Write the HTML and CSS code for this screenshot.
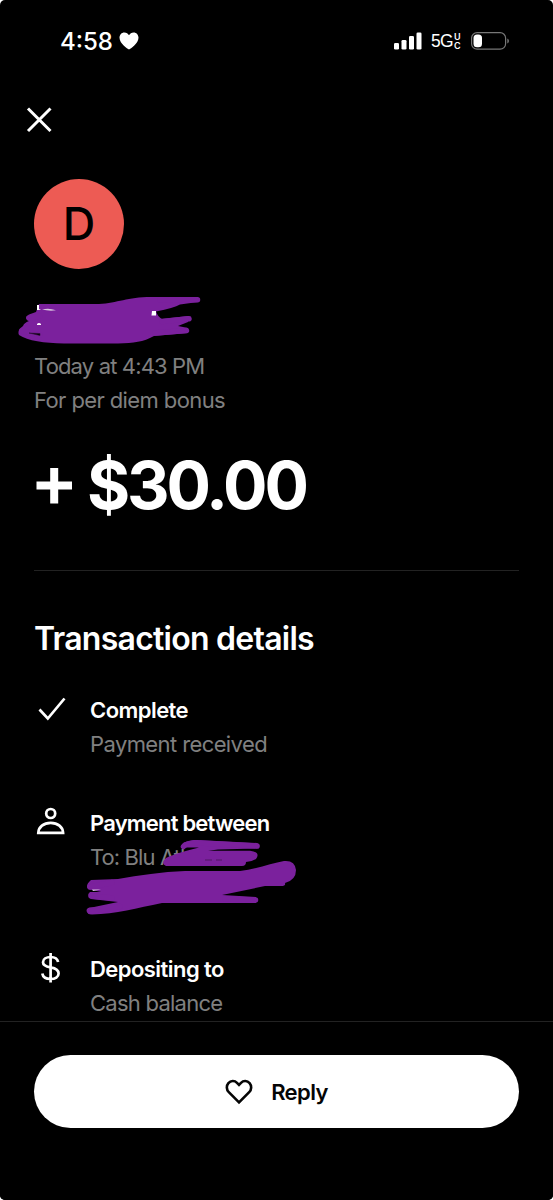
FILE: index.html
```
<!DOCTYPE html>
<html lang="en">
<head>
<meta charset="utf-8">
<title>Transaction details</title>
<link rel="stylesheet" href="styles.css">
</head>
<body>
<main class="screen">
  <header class="status">
    <span class="time">4:58</span>
    <svg class="status-heart" width="20" height="18" viewBox="0 0 20 18"><path fill="#fff" d="M10 17.500C8.500 16.800 0.500 11.500 0.500 5.800C0.500 2.700 2.700 0.500 5.300 0.500C7.500 0.500 9.100 1.700 10 3.300C10.900 1.700 12.500 0.500 14.700 0.500C17.300 0.500 19.500 2.700 19.500 5.800C19.500 11.500 11.500 16.800 10 17.500Z"/></svg>
    <svg class="signal" width="28" height="18" viewBox="0 0 28 18" fill="#fff"><rect x="0" y="11" width="5" height="6.500" rx="1.300"/><rect x="7.500" y="8" width="5" height="9.500" rx="1.300"/><rect x="15" y="4" width="5" height="13.500" rx="1.300"/><rect x="22.500" y="0.500" width="5" height="17" rx="1.300"/></svg>
    <span class="network">5G</span>
    <span class="uc"><span>U</span><span>C</span></span>
    <svg class="battery" width="40" height="20" viewBox="0 0 40 20"><rect x="1.600" y="1.600" width="34" height="16.600" rx="5.500" fill="none" stroke="#777" stroke-width="1.200"/><rect x="3.500" y="3.500" width="8.500" height="12.800" rx="3.500" fill="#fff"/><path d="M37.300 7.500Q39 8.200 39 10T37.300 12.500Z" fill="#777"/></svg>
  </header>

  <nav class="nav">
    <svg width="26" height="26" viewBox="0 0 26 26"><path d="M2 1.500L24.500 24M24.500 1.500L2 24" stroke="#fff" stroke-width="3"/></svg>
  </nav>

  <section class="summary">
    <div class="avatar">D</div>
    <div class="name"></div>
    <p class="muted when">Today at 4:43 PM</p>
    <p class="muted note">For per diem bonus</p>
    <p class="amount"><svg class="plus" width="54" height="72" viewBox="0 0 54 72"><path d="M2.500 36.500H38M20.200 19V54.500" stroke="#fff" stroke-width="8"/></svg><span class="value">$30.00</span></p>
  </section>

  <section class="details">
    <h2>Transaction details</h2>
    <div class="item complete">
      <svg class="icon" width="32" height="34" viewBox="0 0 32 34"><path d="M5.500 16.500L13.800 25.500L30.500 5.500" fill="none" stroke="#fff" stroke-width="2.700"/></svg>
      <div><p class="label l1">Complete</p><p class="muted m1">Payment received</p></div>
    </div>
    <div class="item between">
      <svg class="icon" width="32" height="34" viewBox="0 0 32 34" fill="none" stroke="#fff" stroke-width="2.700"><circle cx="16.700" cy="7.500" r="4.500"/><path d="M4.300 26.800C4.600 21 9.600 16.800 16.700 16.800S28.800 21 29.100 26.800Z"/></svg>
      <div><p class="label l2">Payment between</p><p class="muted m2">To: Blu Ath</p></div>
    </div>
    <div class="item deposit">
      <svg class="icon" width="32" height="34" viewBox="0 0 32 34" fill="none" stroke="#fff" stroke-width="2.700"><path d="M16.600 1V30.500M24.100 10C23.500 6.800 20.600 5 16.600 5C12.400 5 9 7 9 10.200C9 13.600 12.200 14.600 16.600 15.400C21.400 16.300 24.600 17.700 24.600 21.500C24.600 25 21.200 27 16.600 27C12 27 8.900 25 8.300 21.500"/></svg>
      <div><p class="label l3">Depositing to</p><p class="muted m3">Cash balance</p></div>
    </div>
  </section>

  <footer class="footer">
    <button class="reply">
      <svg width="28" height="26" viewBox="0 0 28 26"><path d="M14 23.300L3.800 13.200C1.300 10.700 1.200 6.600 3.400 4.100C5.700 1.500 9.600 1.400 12 3.800L14 5.800L16 3.800C18.400 1.400 22.300 1.500 24.600 4.100C26.800 6.600 26.700 10.700 24.200 13.200Z" fill="none" stroke="#050505" stroke-width="2.600"/></svg>
      <span>Reply</span>
    </button>
  </footer>

  <svg class="marker" width="553" height="1200" viewBox="0 0 553 1200">
    <g fill="#7b219d">
      <path d="M39 304H99C118 303 127 297 151 297H198V302L180 304.500Q174 308 156 311.500Q158 317 162 319L188 316V322L178 326L188 328V333L154 336C143 342 134 343 118 343.500H64C44 343 28 341 19 335Q17 330 23 326Q24 323 29 321Q23 318 29 314.500L36 312Z"/>
      <path d="M181 847C182 842 188 840 197 840L257 843Q262 846 257 848.500L218 849.500L208 850.700H250Q261 852 256 859Q251 862 246 862Q246 866 242 866H166Q160 863 166 858C174 854 186 851 199 847.500L186 847.500Q182 850 181 847Z"/>
      <path d="M91 880L118 879C139 875 162 872 185 871H240C257 869 272 863 284 861Q295 860 296 870Q296 880 285 883Q286 886 281 886H265L222 895L256 897V903H162C137 908 116 914 92 914.500Q85 913 87 909Q88 907 94 907L118 902L91 899Q86 895 90 892H101L88 889Q85 885 91 880Z"/>
    </g>
    <g fill="none" stroke="#7b219d" stroke-width="5.500" stroke-linecap="round">
      <path d="M160 300L197.500 299.700M162 321.500L189 318.700M155 333L186.500 330.500M21.500 331L40 335M29 318L40 316"/>
      <path d="M183.500 846.500Q186 843 198 843M200 843L257 846"/>
      <path d="M90 887L112 882.500M91 896L112 898M90 911.500L120 906.500M225 899L255.500 900"/>
    </g>
    <path d="M37 305h2v4l2 1h-4zM152 311h4v4.500h-4.500zM37 324q2-2 4 0v1h-4z" fill="#fff"/>
    <path d="M42 309.500q7-2 14 .8q-7 1-14-.8zM92 889.500h9l-8 1.500z" fill="#dac5df"/>
    <path d="M29 333l11 .5v2zM205 860h7m4 0h6" fill="#000" stroke="#32103d" stroke-width=".6"/>
  </svg>
</main>
</body>
</html>
```
FILE: styles.css
```
* { box-sizing: border-box; }
html { background: #fff; }
body { margin: 0; font-family: Inter, "Liberation Sans", sans-serif; }
p, h2 { margin: 0; white-space: nowrap; }
svg { display: block; flex: none; }

.screen {
  position: relative;
  width: 553px;
  height: 1200px;
  display: flex;
  flex-direction: column;
  overflow: hidden;
  background: #000;
  color: #fff;
  border-radius: 5px;
}

.status { height: 82px; padding-left: 60px; display: flex; align-items: center; flex: none; }
.time { width: 53px; font-size: 24px; font-weight: 500; letter-spacing: 0; }
.status-heart { margin-left: 6px; }
.signal { margin-left: 255px; }
.network { margin-left: 9px; width: 23px; font: 500 19px/20px "Liberation Sans", sans-serif; letter-spacing: -0.800px; transform: scaleX(0.92); transform-origin: left; }
.uc { width: 8px; display: flex; flex-direction: column; font-size: 9px; font-weight: 600; line-height: 9px; }
.battery { margin-left: 8px; }

.nav { height: 97px; padding: 25px 0 0 26px; flex: none; }

.summary { height: 392px; margin: 0 34px; border-bottom: 1px solid #222; flex: none; }
.avatar {
  width: 90px;
  height: 90px;
  border-radius: 50%;
  background: #ed5b54;
  color: #000;
  font-size: 45px;
  font-weight: 500;
  line-height: 90px;
  text-align: center;
}
.name { height: 80px; }
.muted { font-size: 22px; line-height: 34px; color: #808080; letter-spacing: -0.600px; }
.when { letter-spacing: -0.850px; }
.m2 { letter-spacing: -0.900px; }
.m3 { letter-spacing: -0.750px; }
.amount { display: flex; margin-top: 32px; font-weight: 700; font-size: 66px; line-height: 72px; }
.value { margin-left: -1px; letter-spacing: -3.100px; }

.details { height: 450px; padding: 45px 34px 0; overflow: hidden; flex: none; }
h2 { font-size: 32px; line-height: 46px; font-weight: 600; letter-spacing: -0.750px; }
.item { display: flex; gap: 24px; }
.label { font-size: 22px; line-height: 34px; font-weight: 600; letter-spacing: -0.550px; }
.l2 { letter-spacing: -0.800px; }
.complete { margin-top: 31px; }
.between { margin-top: 45px; }
.deposit { margin-top: 78px; }

.footer { height: 179px; border-top: 1px solid #222; padding: 33px 34px; background: #000; flex: none; }
.reply {
  width: 100%;
  height: 73px;
  border: 0;
  border-radius: 37px;
  background: #fff;
  color: #050505;
  display: flex;
  align-items: center;
  justify-content: center;
  gap: 18px;
  font: 600 22px Inter, sans-serif;
  letter-spacing: -0.600px;
}
.marker { position: absolute; left: 0; top: 0; pointer-events: none; }
```
